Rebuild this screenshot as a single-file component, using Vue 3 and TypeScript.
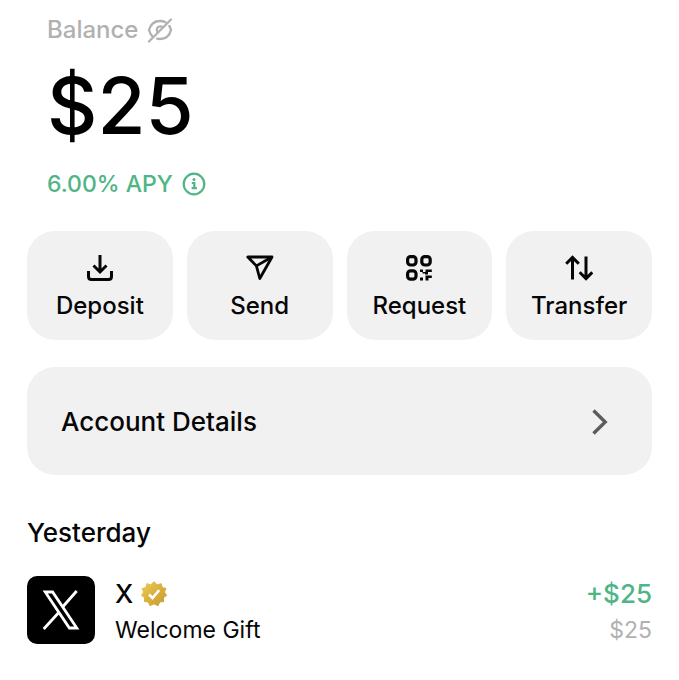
<script setup lang="ts">
import { ref } from 'vue'

interface Action {
  id: 'deposit' | 'send' | 'request' | 'transfer'
  label: string
}

const actions: Action[] = [
  { id: 'deposit', label: 'Deposit' },
  { id: 'send', label: 'Send' },
  { id: 'request', label: 'Request' },
  { id: 'transfer', label: 'Transfer' },
]

const hidden = ref(false)
</script>

<template>
  <main class="wallet">
    <section class="summary">
      <div class="line muted">
        <span>Balance</span>
        <button class="icon-button" type="button" aria-label="Toggle balance" @click="hidden = !hidden">
          <svg width="26" height="26" viewBox="0 0 26 26" fill="none" stroke="currentColor" stroke-width="2.300" stroke-linecap="round">
            <path d="M18.500 5.300C16.900 4.400 15 4 13 4C7 4 3.400 8 2 13C2.600 15.500 3.700 17.600 5.300 19.200" />
            <path d="M22.300 9C23.100 10.200 23.700 11.600 24 13C22.600 18.500 18.800 22 13 22C12 22 11 21.900 10.200 21.600" />
            <path d="M10.500 15.200C8.800 12.500 10.200 9.300 13.300 9.300C14.100 9.300 14.800 9.500 15.400 9.900" />
            <path d="M2 24.500L24 2.500" />
          </svg>
        </button>
      </div>
      <p class="amount">{{ hidden ? '•••' : '$25' }}</p>
      <div class="line gain">
        <span>6.00% APY</span>
        <button class="icon-button" type="button" aria-label="About APY">
          <svg width="24" height="24" viewBox="0 0 24 24" fill="none" stroke="currentColor" stroke-width="2.200">
            <circle cx="12" cy="12" r="10.300" />
            <path d="M9.800 11H12.300V16M9.600 16.200H14.900" />
            <circle cx="12" cy="7.500" r="1.500" fill="currentColor" stroke="none" />
          </svg>
        </button>
      </div>
    </section>

    <nav class="actions" aria-label="Account actions">
      <button v-for="action in actions" :key="action.id" class="action" type="button">
        <svg v-if="action.id === 'deposit'" width="28" height="28" viewBox="0 0 28 28" fill="none" stroke="currentColor" stroke-width="3">
          <path d="M14 1V17.500M7.500 11.500L14 18L20.500 11.500" />
          <path d="M2.500 17V22.500Q2.500 25.500 5.500 25.500H22.500Q25.500 25.500 25.500 22.500V17" />
        </svg>
        <svg v-else-if="action.id === 'send'" width="28" height="28" viewBox="0 0 28 28" fill="none" stroke="currentColor" stroke-width="2.800" stroke-linejoin="round">
          <path d="M1.800 3H26L13.800 24.500L10.400 11.900Z" />
          <path d="M10.400 11.900L25.500 3.300" />
        </svg>
        <svg v-else-if="action.id === 'request'" width="28" height="28" viewBox="0 0 28 28" fill="none" stroke="currentColor" stroke-width="3.200">
          <rect x="2.600" y="2.600" width="8.400" height="8.400" rx="3" />
          <rect x="16.800" y="2.600" width="8.400" height="8.400" rx="3" />
          <rect x="2.600" y="16.800" width="8.400" height="8.400" rx="3" />
          <path fill="currentColor" stroke="none" d="M15 15.500H18V18H20.500V15.500H26.800V18H23V20.500H20V19.500H17.500V18H15ZM15 23.500H18V26.500H15ZM20.500 21.500H26.800V24H23.500V26.500H20.500Z" />
        </svg>
        <svg v-else width="28" height="28" viewBox="0 0 28 28" fill="none" stroke="currentColor" stroke-width="3">
          <path d="M7.500 25.500V4M1.200 9.700L7.500 3.400L13.800 9.700" />
          <path d="M21 2.500V24M14.700 18.300L21 24.600L27.300 18.300" />
        </svg>
        <span>{{ action.label }}</span>
      </button>
    </nav>

    <a class="details" href="#account">
      <span>Account Details</span>
      <svg width="18" height="28" viewBox="0 0 18 28" fill="none" stroke="currentColor" stroke-width="3.400">
        <path d="M2.500 2.500L14.200 14L2.500 25.500" />
      </svg>
    </a>

    <section class="history">
      <h2>Yesterday</h2>
      <article class="entry">
        <div class="avatar">
          <svg width="38" height="40" viewBox="0 0 38 40" fill="none" stroke="#fff">
            <path stroke-width="2.800" d="M3.200 2H10.600L34.800 38H27.400Z" />
            <path stroke-width="2.800" d="M34.700 1L20.600 17M17 22.300L1.700 39" />
          </svg>
        </div>
        <div class="who">
          <div class="name">
            <span>X</span>
            <svg width="26" height="26" viewBox="0 0 26 26" role="img" aria-label="Verified">
              <defs>
                <linearGradient id="gold" x1="0" y1="0" x2="1" y2="1">
                  <stop offset="0" stop-color="#eccc58" />
                  <stop offset="0.500" stop-color="#d9b13d" />
                  <stop offset="1" stop-color="#c89a36" />
                </linearGradient>
              </defs>
              <path fill="url(#gold)" stroke="url(#gold)" stroke-width="1.200" stroke-linejoin="round" d="M13 1L16 4L20 2.700L21 6.500L24.800 7.500L23.200 11.300L25.300 14.300L22.300 16.600L22.500 20.500L18.600 20.900L16.900 24.500L13 22.800L9.100 24.500L7.400 20.900L3.500 20.500L3.700 16.600L.7 14.300L2.800 11.300L1.200 7.500L5 6.500L6 2.700L10 4Z" />
              <path d="M8 13.500L11.500 17L18.200 9.200" fill="none" stroke="#fff" stroke-width="2.600" />
            </svg>
          </div>
          <div class="note">Welcome Gift</div>
        </div>
        <div class="sums">
          <div class="credit">+$25</div>
          <div class="total">$25</div>
        </div>
      </article>
    </section>
  </main>
</template>

<style>
body {
  margin: 0;
  background: #fff;
}
</style>

<style scoped>
.wallet {
  padding: 12px 27px 32px;
  color: #060606;
  font-family: Inter, "Liberation Sans", sans-serif;
  font-size: 26px;
  font-weight: 500;
  line-height: 36px;
}

button {
  border: 0;
  color: inherit;
  font: inherit;
  cursor: pointer;
}

svg {
  display: block;
  flex: none;
}

.summary {
  padding-left: 20px;
}

.line {
  display: flex;
  align-items: center;
  gap: 9px;
  font-size: 24px;
}

.icon-button {
  padding: 0;
  background: none;
}

.muted,
.total {
  color: #b1b1b1;
}

.gain,
.credit {
  color: #4fb584;
}

.line.gain {
  font-size: 23px;
}

.amount {
  margin: 10px 0 12px;
  color: #000;
  font-size: 78px;
  line-height: 96px;
}

.actions {
  display: grid;
  grid-template-columns: repeat(4, 1fr);
  gap: 14px;
  margin-top: 29px;
}

.action {
  display: flex;
  flex-direction: column;
  align-items: center;
  gap: 6px;
  padding: 23px 0 16px;
  border-radius: 28px;
  background: #f1f1f1;
  font-size: 24px;
}

.details {
  display: flex;
  align-items: center;
  justify-content: space-between;
  margin-top: 27px;
  padding: 37px 43px 35px 34px;
  border-radius: 28px;
  background: #f1f1f1;
  color: inherit;
  text-decoration: none;
}

.details svg {
  color: #5c5c5c;
}

h2 {
  margin: 40px 0 25px;
  font: inherit;
}

.entry {
  display: flex;
  align-items: flex-start;
  gap: 20px;
}

.avatar {
  display: flex;
  align-items: center;
  justify-content: center;
  width: 68px;
  height: 68px;
  border-radius: 10px;
  background: #000;
}

.who {
  flex: 1;
}

.name {
  display: flex;
  align-items: center;
  gap: 8px;
}

.note,
.total {
  font-size: 23px;
  font-weight: 400;
}

.sums {
  text-align: right;
}
</style>
